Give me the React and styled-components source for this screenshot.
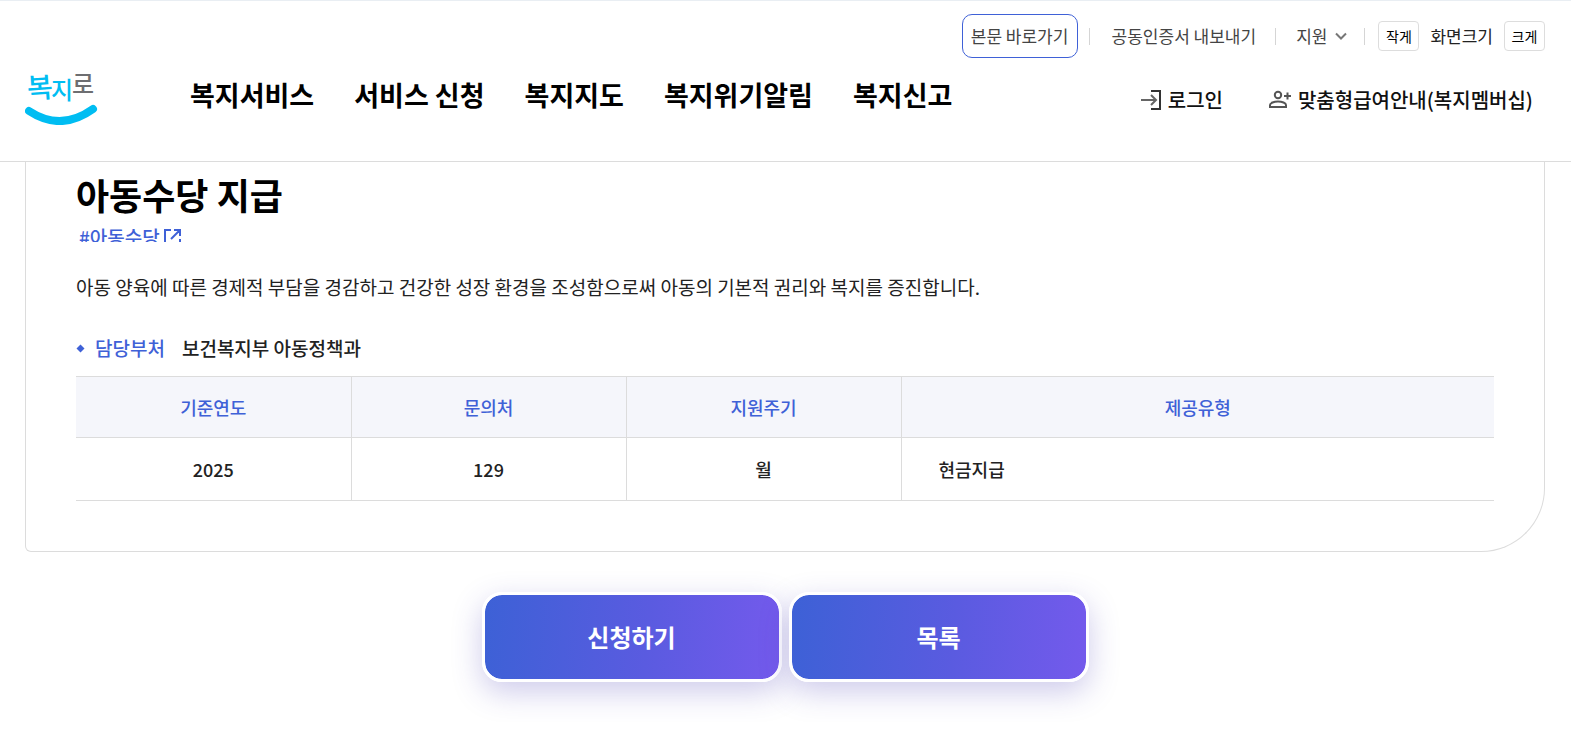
import React from "react";
import styled, { createGlobalStyle } from "styled-components";

const GlobalStyle = createGlobalStyle`
  * {
    box-sizing: border-box;
  }

  body {
    margin: 0;
    background: #fff;
    color: #222;
    font-family: "Noto Sans CJK KR", "Noto Sans", sans-serif;
    word-break: keep-all;
  }

  a {
    color: inherit;
    text-decoration: none;
  }

  button {
    font-family: inherit;
    cursor: pointer;
  }
`;

const Header = styled.header`
  padding: 13px 26px 36px 25px;
  border-top: 1px solid #e9eef3;
  border-bottom: 1px solid #dcdcdc;
`;

const UtilRow = styled.div`
  display: flex;
  justify-content: flex-end;
  align-items: center;
  font-size: 17px;
  line-height: 24px;
  color: #444;
`;

const SkipLink = styled.a`
  display: flex;
  align-items: center;
  justify-content: center;
  width: 116px;
  height: 44px;
  border: 1px solid #3f61d7;
  border-radius: 10px;
`;

const Divider = styled.span`
  width: 1px;
  height: 17px;
  margin-left: ${(props) => props.$left}px;
  margin-right: ${(props) => props.$right}px;
  background: #d5d5d5;
`;

const SupportButton = styled.button`
  display: flex;
  align-items: center;
  gap: 8px;
  padding: 0;
  border: 0;
  background: none;
  color: inherit;
  font-size: 17px;
  line-height: 24px;
`;

const ZoomControl = styled.div`
  display: flex;
  align-items: center;
  gap: 11px;
  color: #222;
`;

const ZoomButton = styled.button`
  width: 41px;
  height: 30px;
  padding: 0;
  border: 1px solid #ddd;
  border-radius: 4px;
  background: #fff;
  color: #000;
  font-size: 14px;
`;

const MainRow = styled.div`
  display: flex;
  align-items: center;
  padding-top: 4px;
`;

const Logo = styled.a`
  display: block;
  width: 74px;
  height: 63px;

  svg {
    display: block;
  }
`;

const Nav = styled.nav`
  display: flex;
  gap: 40px;
  margin-left: 91px;
  padding-top: 2px;
  color: #000;
  font-size: 27px;
  font-weight: 700;
  line-height: 40px;
`;

const MemberMenu = styled.div`
  display: flex;
  gap: 46px;
  margin-left: auto;
  padding: 12px 12px 0 0;
`;

const MemberLink = styled.a`
  display: flex;
  align-items: center;
  gap: 6px;
  color: #111;
  font-size: 20px;
  font-weight: 500;
  line-height: 28px;
`;

const Main = styled.main`
  padding: 0 26px 40px 25px;
`;

const Card = styled.section`
  padding: 5px 50px 50px;
  border: 1px solid #dcdcdc;
  border-top: 0;
  border-radius: 0 0 64px 6px;
`;

const Title = styled.h1`
  margin: 0;
  color: #000;
  font-size: 36px;
  font-weight: 700;
  line-height: 54px;
`;

const TagList = styled.div`
  height: 21px;
  padding-top: 2px;
  overflow: hidden;
`;

const Tag = styled.a`
  && {
    display: flex;
    align-items: center;
    gap: 4px;
    padding-left: 3px;
    color: #3f61d7;
    font-size: 19px;
    font-weight: 500;
    line-height: 28px;
  }
`;

const Description = styled.p`
  margin: 30px 0 0;
  font-size: 19px;
  line-height: 30px;
`;

const Department = styled.dl`
  display: flex;
  align-items: center;
  margin: 31px 0 13px;
  font-size: 19px;
  font-weight: 500;
  line-height: 30px;

  dt {
    display: flex;
    align-items: center;
    gap: 10px;
    color: #3f61d7;
  }

  dd {
    margin: 0 0 0 17px;
  }
`;

const Table = styled.table`
  width: 100%;
  table-layout: fixed;
  border-collapse: collapse;
  font-size: 18px;
  line-height: 28px;

  th,
  td {
    padding: 16px 0;
    border: 1px solid #dcdcdc;
    font-weight: 500;
    text-align: center;
  }

  td {
    padding: 17px 0;
  }

  th {
    width: 275px;
    background: #f5f6fb;
    color: #3f61d7;
  }

  th:first-child,
  td:first-child {
    border-left: 0;
  }

  th:last-child,
  td:last-child {
    border-right: 0;
  }

  th:last-child {
    width: auto;
  }

  td:last-child {
    padding-left: 37px;
    text-align: left;
  }
`;

const Actions = styled.div`
  display: flex;
  justify-content: center;
  gap: 7px;
  margin-top: 40px;
`;

const ActionButton = styled.button`
  width: 300px;
  height: 90px;
  padding: 0 0 2px;
  border: 3px solid #fff;
  border-radius: 20px;
  background: linear-gradient(95deg, #3d61d6, #5a5be0 55%, #745aec) padding-box;
  box-shadow: 0 10px 30px rgba(66, 56, 176, 0.26);
  color: #fff;
  font-size: 24px;
  font-weight: 700;
`;

const LogoMark = () => (
  <svg width="74" height="63" viewBox="0 0 74 63" role="img" aria-label="복지로">
    <g fontFamily="'Noto Sans CJK KR', sans-serif" fontWeight="500">
      <text x="2" y="36" fontSize="28" fill="#00bdf2" transform="rotate(-4 14 26)">복</text>
      <text x="26" y="37" fontSize="24" fill="#00bdf2">지</text>
      <text x="47" y="31" fontSize="24" fill="#6d6e71">로</text>
    </g>
    <path d="M4 49 Q36 70 68 47" fill="none" stroke="#00bdf2" strokeWidth="8" strokeLinecap="round" />
  </svg>
);

const ChevronIcon = () => (
  <svg width="12" height="8" viewBox="0 0 12 8" fill="none" stroke="#777" strokeWidth="2">
    <path d="M1 1.5 6 6.5l5-5" />
  </svg>
);

const LoginIcon = () => (
  <svg width="21" height="20" viewBox="0 0 21 20" fill="none" strokeWidth="2">
    <path d="M10 1h9v18h-9" stroke="#333" />
    <path d="M0 10h15M10 5l5 5-5 5" stroke="#666" />
  </svg>
);

const MemberIcon = () => (
  <svg width="23" height="19" viewBox="0 0 23 19" fill="none" stroke="#555" strokeWidth="2">
    <circle cx="9" cy="5" r="3.2" />
    <path d="M1 17v-2c0-2 4-3.5 8-3.5s8 1.500 8 3.500v2zM18.500 2.500v7M15 6h7" />
  </svg>
);

const OpenIcon = () => (
  <svg width="17" height="17" viewBox="0 0 17 17" fill="none" stroke="currentColor" strokeWidth="2">
    <path d="M7 1H1v15h15v-6M7 10l8-8M10 1h6v6" />
  </svg>
);

const DiamondIcon = () => (
  <svg width="9" height="9" viewBox="0 0 9 9" fill="#3f61d7">
    <path d="M4.500 0.500 8.500 4.500 4.500 8.500 0.500 4.500z" />
  </svg>
);

const menus = ["복지서비스", "서비스 신청", "복지지도", "복지위기알림", "복지신고"];

const App = () => {
  return (
    <>
      <GlobalStyle />
      <Header>
        <UtilRow>
          <SkipLink href="#content">본문 바로가기</SkipLink>
          <Divider $left={11} $right={22} />
          <a href="#cert">공동인증서 내보내기</a>
          <Divider $left={19} $right={20} />
          <SupportButton type="button">
            지원
            <ChevronIcon />
          </SupportButton>
          <Divider $left={17} $right={13} />
          <ZoomControl>
            <ZoomButton type="button">작게</ZoomButton>
            <span>화면크기</span>
            <ZoomButton type="button">크게</ZoomButton>
          </ZoomControl>
        </UtilRow>
        <MainRow>
          <Logo href="#home">
            <LogoMark />
          </Logo>
          <Nav>
            {menus.map((menu) => (
              <a href="#menu" key={menu}>{menu}</a>
            ))}
          </Nav>
          <MemberMenu>
            <MemberLink href="#login">
              <LoginIcon />
              로그인
            </MemberLink>
            <MemberLink href="#membership">
              <MemberIcon />
              맞춤형급여안내(복지멤버십)
            </MemberLink>
          </MemberMenu>
        </MainRow>
      </Header>

      <Main id="content">
        <Card>
          <Title>아동수당 지급</Title>
          <TagList>
            <Tag href="#tag">
              #아동수당
              <OpenIcon />
            </Tag>
          </TagList>
          <Description>
            아동 양육에 따른 경제적 부담을 경감하고 건강한 성장 환경을 조성함으로써 아동의 기본적 권리와 복지를 증진합니다.
          </Description>
          <Department>
            <dt>
              <DiamondIcon />
              담당부처
            </dt>
            <dd>보건복지부 아동정책과</dd>
          </Department>
          <Table>
            <thead>
              <tr>
                <th scope="col">기준연도</th>
                <th scope="col">문의처</th>
                <th scope="col">지원주기</th>
                <th scope="col">제공유형</th>
              </tr>
            </thead>
            <tbody>
              <tr>
                <td>2025</td>
                <td>129</td>
                <td>월</td>
                <td>현금지급</td>
              </tr>
            </tbody>
          </Table>
        </Card>
        <Actions>
          <ActionButton type="button">신청하기</ActionButton>
          <ActionButton type="button">목록</ActionButton>
        </Actions>
      </Main>
    </>
  );
};

export default App;
